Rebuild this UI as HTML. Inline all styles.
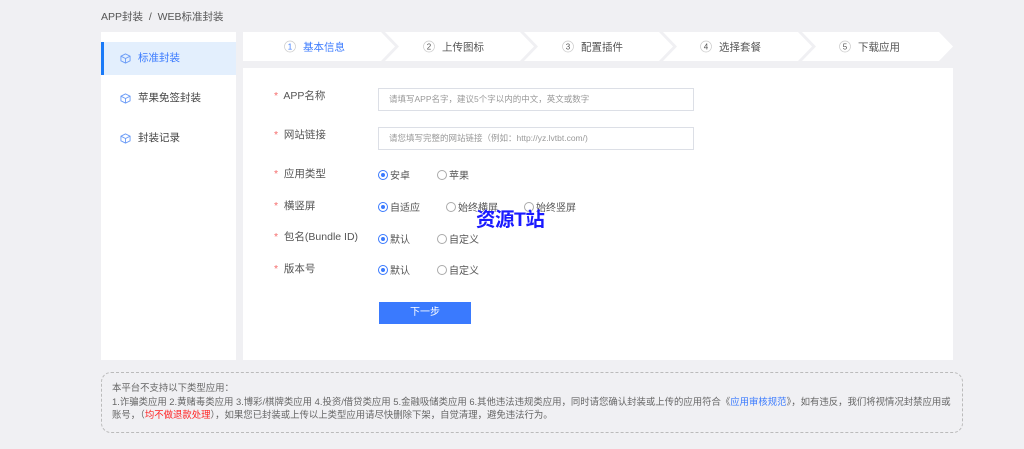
<!DOCTYPE html>
<html><head><meta charset="utf-8"><style>
*{margin:0;padding:0;box-sizing:border-box}
body{width:1024px;height:449px;background:#f0f0f3;font-family:"Liberation Sans","Noto Sans CJK SC",sans-serif;color:#555;position:relative;overflow:hidden;font-size:9px}
.a{position:absolute;white-space:nowrap}
.side{left:101px;top:32px;width:135px;height:328px;background:#fff}
.item{position:absolute;left:0;width:135px;height:33px;line-height:33px;padding-left:37px;font-size:10.5px;color:#444}
.item svg{position:absolute;left:19px;top:11px}
.act{background:#e3effd;color:#3a7afe;border-left:3px solid #1a7af8;padding-left:34px}
.act svg{left:16px}
.steps{left:243px;top:32px;width:710px;height:29px}
.card{left:243px;top:68px;width:710px;height:292px;background:#fff}
.lbl{font-size:10.5px;color:#555}
.star{color:#f56c6c}
.inp{left:378px;width:316px;height:23px;border:1px solid #dcdfe6;background:#fff;font-size:8.5px;color:#999;line-height:21px;padding-left:10px}
.r{font-size:10px;color:#555}
.r i{display:inline-block;width:10px;height:10px;border:1px solid #aaa;border-radius:50%;vertical-align:-1px;margin-right:2px;position:relative}
.r i.on{border-color:#3a7afe}
.r i.on:after{content:"";position:absolute;left:2px;top:2px;width:4px;height:4px;border-radius:50%;background:#3a7afe}
.btn{left:379px;top:302px;width:92px;height:22px;background:#3a7afe;color:#fff;text-align:center;line-height:22px;font-size:10px}
.note{left:101px;top:372px;width:862px;height:61px;border:1px dashed #bbb;border-radius:10px;padding:8px 10px;font-size:9.4px;line-height:13.5px;color:#666;white-space:normal}
</style></head><body>
<div class="a" style="left:101px;top:9px;font-size:10.5px;color:#555">APP封装 &nbsp;/ &nbsp;WEB标准封装</div>
<div class="a side">
 <div class="item act" style="top:10px"><svg width="11" height="11" viewBox="0 0 12 12" fill="none" stroke="#6b9cf7" stroke-width="1"><path d="M6 1 L11 3.5 V8.5 L6 11 L1 8.5 V3.5Z M1 3.5 L6 6 L11 3.5 M6 6 V11"/></svg>标准封装</div>
 <div class="item" style="top:50px"><svg width="11" height="11" viewBox="0 0 12 12" fill="none" stroke="#6b9cf7" stroke-width="1"><path d="M6 1 L11 3.5 V8.5 L6 11 L1 8.5 V3.5Z M1 3.5 L6 6 L11 3.5 M6 6 V11"/></svg>苹果免签封装</div>
 <div class="item" style="top:90px"><svg width="11" height="11" viewBox="0 0 12 12" fill="none" stroke="#6b9cf7" stroke-width="1"><path d="M6 1 L11 3.5 V8.5 L6 11 L1 8.5 V3.5Z M1 3.5 L6 6 L11 3.5 M6 6 V11"/></svg>封装记录</div>
</div>
<svg class="a steps" width="710" height="29" viewBox="0 0 710 29">
 <path d="M0 0H138L152 14.5L138 29H0Z" fill="#fff"/>
 <path d="M142 0H277L291 14.5L277 29H142L156 14.5Z" fill="#fff"/>
 <path d="M281 0H416L430 14.5L416 29H281L295 14.5Z" fill="#fff"/>
 <path d="M420 0H555L569 14.5L555 29H420L434 14.5Z" fill="#fff"/>
 <path d="M559 0H696L710 14.5L696 29H559L573 14.5Z" fill="#fff"/>
 <g font-size="10.5" font-family="Liberation Sans,Noto Sans CJK SC,sans-serif">
 <circle cx="47" cy="14.5" r="5.5" fill="none" stroke="#ccc" stroke-width="0.7"/><text x="47" y="17.5" text-anchor="middle" fill="#3a7afe" font-size="8">1</text><text x="60" y="18.5" fill="#3a7afe">基本信息</text>
 <circle cx="186" cy="14.5" r="5.5" fill="none" stroke="#ccc" stroke-width="0.7"/><text x="186" y="17.5" text-anchor="middle" fill="#555" font-size="8">2</text><text x="199" y="18.5" fill="#555">上传图标</text>
 <circle cx="325" cy="14.5" r="5.5" fill="none" stroke="#ccc" stroke-width="0.7"/><text x="325" y="17.5" text-anchor="middle" fill="#555" font-size="8">3</text><text x="338" y="18.5" fill="#555">配置插件</text>
 <circle cx="463" cy="14.5" r="5.5" fill="none" stroke="#ccc" stroke-width="0.7"/><text x="463" y="17.5" text-anchor="middle" fill="#555" font-size="8">4</text><text x="476" y="18.5" fill="#555">选择套餐</text>
 <circle cx="602" cy="14.5" r="5.5" fill="none" stroke="#ccc" stroke-width="0.7"/><text x="602" y="17.5" text-anchor="middle" fill="#555" font-size="8">5</text><text x="615" y="18.5" fill="#555">下载应用</text>
 </g>
</svg>
<div class="a card"></div>
<div class="a lbl" style="left:274px;top:88px"><span class="star">*</span>&nbsp; APP名称</div>
<div class="a inp" style="top:88px">请填写APP名字，建议5个字以内的中文，英文或数字</div>
<div class="a lbl" style="left:274px;top:127px"><span class="star">*</span>&nbsp; 网站链接</div>
<div class="a inp" style="top:127px">请您填写完整的网站链接（例如：http://yz.lvtbt.com/)</div>
<div class="a lbl" style="left:274px;top:166px"><span class="star">*</span>&nbsp; 应用类型</div>
<div class="a r" style="left:378px;top:167px"><i class="on"></i>安卓</div>
<div class="a r" style="left:437px;top:167px"><i></i>苹果</div>
<div class="a lbl" style="left:274px;top:198px"><span class="star">*</span>&nbsp; 横竖屏</div>
<div class="a r" style="left:378px;top:199px"><i class="on"></i>自适应</div>
<div class="a r" style="left:446px;top:199px"><i></i>始终横屏</div>
<div class="a r" style="left:524px;top:199px"><i></i>始终竖屏</div>
<div class="a lbl" style="left:274px;top:229px"><span class="star">*</span>&nbsp; 包名(Bundle ID)</div>
<div class="a r" style="left:378px;top:231px"><i class="on"></i>默认</div>
<div class="a r" style="left:437px;top:231px"><i></i>自定义</div>
<div class="a lbl" style="left:274px;top:261px"><span class="star">*</span>&nbsp; 版本号</div>
<div class="a r" style="left:378px;top:262px"><i class="on"></i>默认</div>
<div class="a r" style="left:437px;top:262px"><i></i>自定义</div>
<div class="a" style="left:476px;top:203px;font-size:19.5px;font-weight:bold;color:#1a1aff;letter-spacing:-0.5px">资源T站</div>
<div class="a btn">下一步</div>
<div class="a note">本平台不支持以下类型应用：<br>1.诈骗类应用 2.黄赌毒类应用 3.博彩/棋牌类应用 4.投资/借贷类应用 5.金融吸储类应用 6.其他违法违规类应用，同时请您确认封装或上传的应用符合《<span style="color:#3a7afe">应用审核规范</span>》，如有违反，我们将视情况封禁应用或账号，（<span style="color:#f22">均不做退款处理</span>），如果您已封装或上传以上类型应用请尽快删除下架，自觉清理，避免违法行为。</div>
</body></html>
